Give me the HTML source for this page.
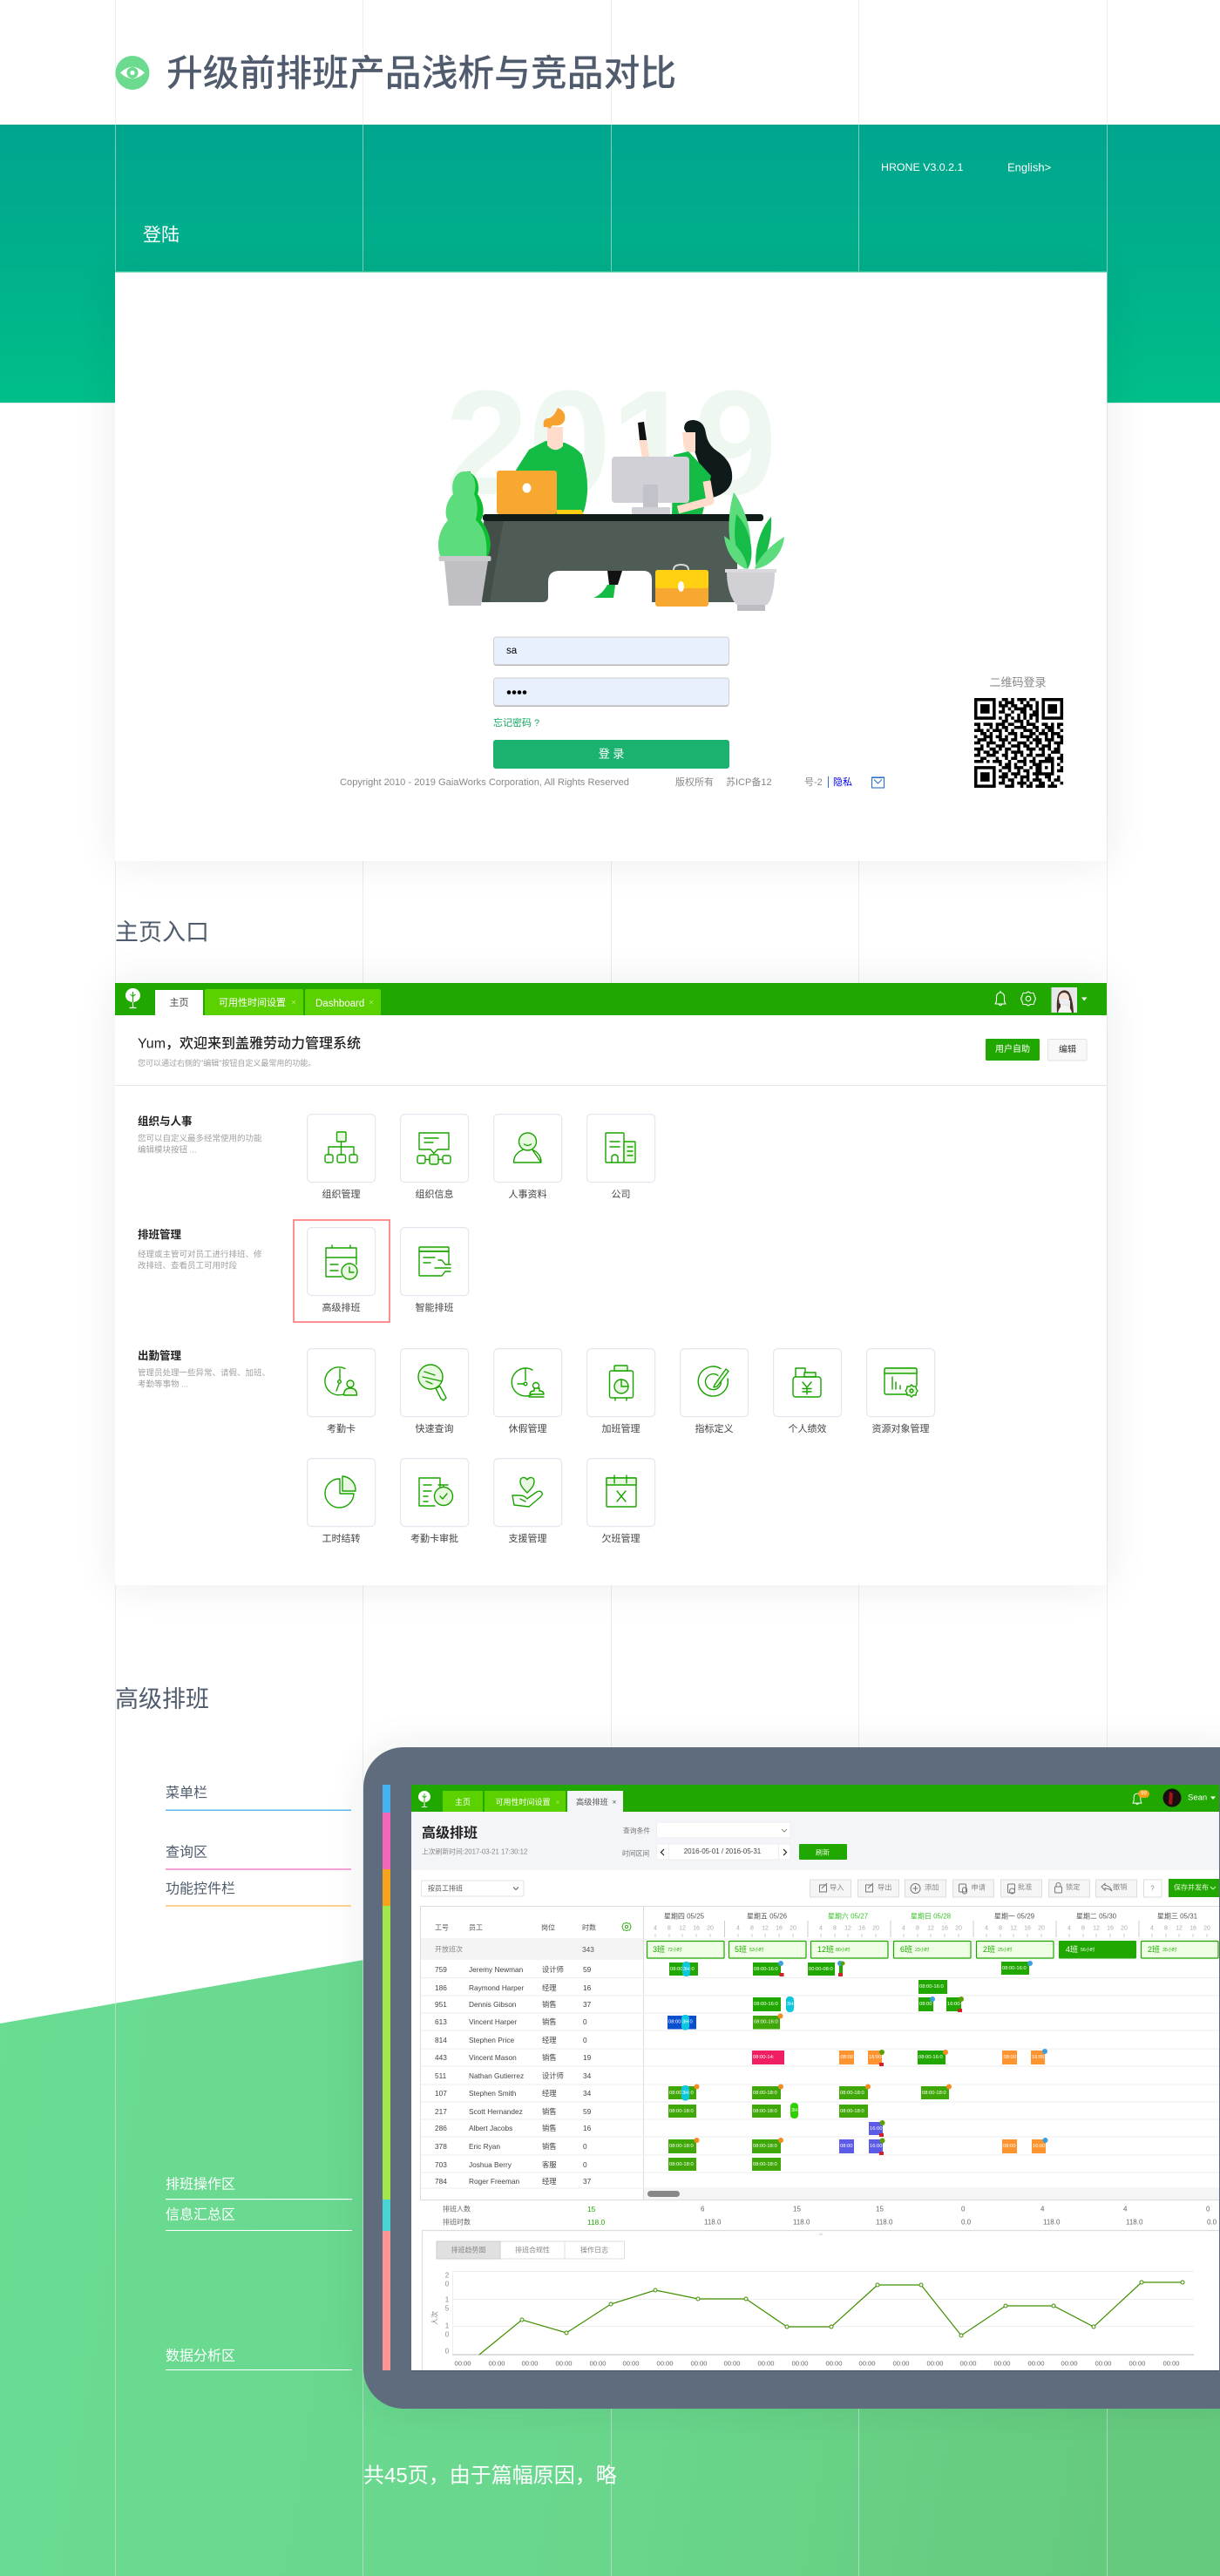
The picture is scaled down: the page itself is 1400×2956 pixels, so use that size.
<!DOCTYPE html>
<html lang="zh-CN">
<head>
<meta charset="utf-8">
<title>升级前排班产品浅析与竞品对比</title>
<style>
html,body{margin:0;padding:0;background:#fff;}
#page{position:relative;width:1400px;height:2956px;overflow:hidden;background:#fff;}
svg{position:absolute;left:0;top:0;display:block;}
.pn{position:absolute;background:#fff;box-shadow:0 0 44px rgba(0,40,40,.085);}
text{font-family:"Liberation Sans","Noto Sans CJK SC",sans-serif;dominant-baseline:central;white-space:pre;}
.m{text-anchor:middle;}
.ic{fill:none;stroke:#1aa300;stroke-width:1.4;stroke-linejoin:round;stroke-linecap:round;}
.pale{fill:#e9f8e0;}
.card{fill:#fff;stroke:#e6e6ef;stroke-width:1.2;}
.lb{font-size:11px;fill:#444;text-anchor:middle;}
.sh{font-size:12.5px;font-weight:700;fill:#222;}
.ss{font-size:9.5px;fill:#a0a0a0;}
.r{font-size:8.3px;fill:#444;}
.hd{font-size:8px;fill:#555;}
.tk{font-size:7px;fill:#aaa;text-anchor:middle;}
.dt{font-size:8px;fill:#555;text-anchor:middle;}
.dg{font-size:8px;fill:#3bc12a;text-anchor:middle;}
.bx{fill:#efffe5;stroke:#20a800;stroke-width:1.2;}
.bn{font-size:9px;fill:#20a800;}
.bs{font-size:5.2px;fill:#20a800;}
.b{font-size:5.8px;fill:#fff;}
.g1{fill:#20a800;}.g2{fill:#3fa808;}.or{fill:#fd9430;}.pu{fill:#5b5be8;}.cy{fill:#0cc8de;}
.tb{fill:#f5f5f5;stroke:#dcdcdc;stroke-width:1;}
.tt{font-size:8.2px;fill:#888;}
.ti{fill:none;stroke:#777;stroke-width:1;}
.sm{font-size:8px;fill:#666;}
.ax{font-size:7.6px;fill:#666;text-anchor:middle;}
.yl{font-size:8px;fill:#888;text-anchor:middle;}
.an{font-size:16px;}
</style>
</head>
<body>
<div id="page">

<svg width="1400" height="2956" viewBox="0 0 1400 2956">
  <defs>
    <linearGradient id="band" x1="0" y1="0" x2="0" y2="1"><stop offset="0" stop-color="#00a58e"/><stop offset=".5" stop-color="#00b08c"/><stop offset="1" stop-color="#00bf89"/></linearGradient>
    <linearGradient id="poly" x1="0" y1="0" x2="1" y2="0.1"><stop offset="0" stop-color="#6adc93"/><stop offset=".6" stop-color="#69d68c"/><stop offset="1" stop-color="#65ca7e"/></linearGradient>
  </defs>
  <rect x="0" y="143" width="1400" height="319" fill="url(#band)"/>
  <rect x="0" y="462" width="1400" height="1" fill="#d6efe7"/>
  <polygon points="0,2322 1400,2077 1400,2956 0,2956" fill="url(#poly)"/>
  <g stroke="#dfe1e3" stroke-opacity=".6" stroke-width="1">
    <path d="M132.5 0V2956M416.5 0V2956M701.5 0V2956M985.5 0V2956M1270.5 0V2956"/>
  </g>
</svg>

<div class="pn" style="left:132px;top:312px;width:1138px;height:676px;"></div>
<div class="pn" style="left:132px;top:1128px;width:1138px;height:691px;"></div>
<div class="pn" style="left:417px;top:2005px;width:1000px;height:759px;background:#5f6c7e;border-radius:46px 0 0 46px;"></div>

<svg width="1400" height="2956" viewBox="0 0 1400 2956">
  <!-- page title -->
  <circle cx="152" cy="83.5" r="19.5" fill="#6cdb90"/>
  <path d="M138 83.5Q152 70 166 83.5Q152 97 138 83.5Z" fill="#fff"/>
  <circle cx="152" cy="83.5" r="6.5" fill="#6cdb90"/>
  <circle cx="152" cy="83.5" r="2.6" fill="#fff"/>
  <text x="191" y="84" font-size="41.8" font-weight="500" fill="#505c6e">升级前排班产品浅析与竞品对比</text>

  <!-- login header -->
  <rect x="132" y="311" width="1138" height="1.5" fill="#2cc39a"/>
  <text x="1011" y="192" font-size="12.4" fill="#fff">HRONE V3.0.2.1</text>
  <text x="1156" y="192" font-size="13" fill="#fff">English&gt;</text>
  <text x="164" y="270" font-size="21" fill="#fff">登陆</text>

  <!-- illustration -->
  <text x="511" y="567" font-size="171" font-weight="700" fill="#eef8f0" style="dominant-baseline:alphabetic">2019</text>
  <!-- man -->
  <path d="M591 541L607 516Q620 509 626 506L648 508Q662 514 668 522Q675 545 674 565Q672 585 668 590L600 590Z" fill="#14bb45"/>
  <path d="M628 490H646V512Q637 521 628 511Z" fill="#ffdccb"/>
  <path d="M624 490Q622 480 630 480Q636 478 640 468Q650 472 648 482Q645 490 634 488L631 492L628 490Z" fill="#f7a12e"/>
  <rect x="570" y="540" width="69" height="50" rx="3" fill="#f7a830"/>
  <ellipse cx="604.5" cy="560" rx="5" ry="5.5" fill="#fff"/>
  <path d="M639 585H667L670 590H639Z" fill="#ffd012"/>
  <!-- woman -->
  <path d="M733 505L742 503L745 525L737 525Z" fill="#ffdccb"/>
  <path d="M732 485L739 484L742 505L734 505Z" fill="#121212"/>
  <path d="M785 492Q785 482 796 482Q808 483 810 497Q812 510 822 517Q842 530 840 550Q838 565 818 571L815 560Q800 530 795 510Z" fill="#0e1b1a"/>
  <path d="M783 496H798V518L788 520Q783 510 784 505Z" fill="#ffdccb"/>
  <path d="M773 522L790 518Q806 535 816 546L806 590H771Z" fill="#14bb45"/>
  <path d="M811 552L815 575L778 585" fill="none" stroke="#ffdccb" stroke-width="9" stroke-linejoin="round"/>
  <rect x="702" y="524" width="89" height="53" rx="4" fill="#d0d0d6"/>
  <rect x="738" y="556" width="17" height="27" fill="#c2c2ca"/>
  <rect x="725" y="582" width="44" height="8" rx="1" fill="#d0d0d6"/>
  <!-- desk -->
  <path d="M555 598H846V691H748V665Q748 655 738 655H642Q629 655 629 668V685Q629 691 622 691H553Z" fill="#4f5b55"/>
  <path d="M556 598H578Q570 640 562 691H553Z" fill="#434e49"/>
  <path d="M697 655H714L709 671H699Z" fill="#121212"/>
  <path d="M697 671H706L704 686H681Q691 682 697 671Z" fill="#14bb45"/>
  <rect x="554" y="590" width="322" height="8" rx="3" fill="#0f1c1a"/>
  <!-- briefcase -->
  <path d="M773 654Q773 648 781.500 648Q790 648 790 654" fill="none" stroke="#d9d9d9" stroke-width="2"/>
  <rect x="752" y="654" width="61" height="42" rx="3" fill="#f7a830"/>
  <path d="M752 657Q752 654 755 654H810Q813 654 813 657V672Q813 675 810 675H755Q752 675 752 672Z" fill="#ffd012"/>
  <ellipse cx="781.500" cy="673" rx="3.5" ry="6" fill="#fff"/>
  <!-- left plant -->
  <path d="M533 541C545 541 552 555 548 567C556 578 556 590 552 597C562 610 566 625 560 638H540V541Z" fill="#0cbf30"/>
  <path d="M533 541C522 541 517 555 520 567C512 575 509 590 514 597C505 607 500 622 505 638H558C560 620 555 605 546 597C549 585 548 575 544 567C548 555 544 541 533 541Z" fill="#5cdc7c"/>
  <path d="M510 644H560L552 695H515Z" fill="#bfbfc4"/>
  <rect x="503.500" y="638" width="60" height="6" rx="2" fill="#c9c9cd"/>
  <!-- right plant -->
  <path d="M885 593C870 610 865 635 868 653C880 640 886 620 885 593Z" fill="#17bb47"/>
  <path d="M842 565C832 600 835 640 855 653C868 630 860 590 842 565Z" fill="#5cdc7c"/>
  <path d="M845 590C840 620 845 640 858 653C868 635 860 605 845 590Z" fill="#17bb47"/>
  <path d="M900 616C885 625 870 640 866 653C885 650 898 635 900 616Z" fill="#5cdc7c"/>
  <path d="M831 615C833 635 845 650 858 653C855 635 845 625 831 615Z" fill="#5cdc7c"/>
  <path d="M834 657H889C889 675 885 690 880 694H846C840 690 834 675 834 657Z" fill="#d0d0d5"/>
  <rect x="846" y="694" width="32" height="7" fill="#bcbcc2"/>
  <rect x="832" y="653" width="59" height="4" fill="#dadade"/>

  <!-- login form -->
  <rect x="566.500" y="731" width="270" height="33" rx="3" fill="#b9b9b9"/>
  <rect x="566.500" y="731" width="270" height="31.500" rx="3" fill="#e8f0fe" stroke="#cfcfcf"/>
  <text x="581" y="747" font-size="11.5" fill="#000">sa</text>
  <rect x="566.500" y="778" width="270" height="33" rx="3" fill="#b9b9b9"/>
  <rect x="566.500" y="778" width="270" height="31.500" rx="3" fill="#e8f0fe" stroke="#cfcfcf"/>
  <g fill="#000"><circle cx="584" cy="794.500" r="2.300"/><circle cx="590" cy="794.500" r="2.300"/><circle cx="596" cy="794.500" r="2.300"/><circle cx="602" cy="794.500" r="2.300"/></g>
  <text x="566" y="830" font-size="11" fill="#10a860">忘记密码 ?</text>
  <rect x="566" y="849" width="271" height="33" rx="3" fill="#1bb270"/>
  <text x="701.500" y="865" font-size="13" fill="#fff" class="m">登 录</text>
  <text x="390" y="898" font-size="11" fill="#888" textLength="332" lengthAdjust="spacingAndGlyphs">Copyright 2010 - 2019 GaiaWorks Corporation, All Rights Reserved</text>
  <text x="775" y="898" font-size="11" fill="#888">版权所有</text>
  <text x="833" y="898" font-size="11" fill="#888">苏ICP备12</text>
  <text x="923" y="898" font-size="11" fill="#888">号-2</text>
  <rect x="950" y="891" width="1" height="13" fill="#2a70c8"/>
  <text x="956" y="898" font-size="11" fill="#0000ee">隐私</text>
  <rect x="1000.500" y="892" width="14" height="12" fill="none" stroke="#2a70c8" stroke-width="1.1"/>
  <path d="M1001 892.500H1014M1003 894.500L1007.500 899L1012 894.500" fill="none" stroke="#2a70c8" stroke-width="1"/>

  <text x="1168" y="783" font-size="13" fill="#888" class="m">二维码登录</text>
  <!-- QR -->
  <g transform="translate(1118 801) scale(3.52 3.55)">
    <g fill="none" stroke="#000" stroke-width="1">
      <rect x=".5" y=".5" width="6" height="6"/><rect x="22.500" y=".5" width="6" height="6"/><rect x=".5" y="22.500" width="6" height="6"/>
      <path d="M9 .5h2M12 .5h1M14 .5h3M18 .5h2M8 1.500h1M10 1.500h3M15 1.500h1M17 1.500h1M20 1.500h1M8 2.500h3M12 2.500h2M16 2.500h3M20 2.500h1M9 3.500h1M11 3.500h1M13 3.500h4M18 3.500h1M20 3.500h1M8 4.500h2M12 4.500h1M15 4.500h2M19 4.500h2M10 5.500h2M14 5.500h1M16 5.500h1M18 5.500h3M8 6.500h1M10 6.500h1M12 6.500h1M14 6.500h1M16 6.500h1M18 6.500h1M20 6.500h1M9 7.500h2M13 7.500h3M17 7.500h1M20 7.500h1M0 8.500h2M3 8.500h3M7 8.500h3M11 8.500h2M15 8.500h1M17 8.500h3M22 8.500h2M25 8.500h1M27 8.500h2M1 9.500h1M5 9.500h1M7 9.500h1M9 9.500h2M13 9.500h4M19 9.500h2M23 9.500h3M27 9.500h1M0 10.500h3M4 10.500h1M6 10.500h3M10 10.500h1M12 10.500h1M16 10.500h3M20 10.500h1M22 10.500h1M24 10.500h2M28 10.500h1M2 11.500h2M5 11.500h1M8 11.500h1M11 11.500h3M15 11.500h1M18 11.500h2M21 11.500h3M25 11.500h3M0 12.500h1M3 12.500h3M7 12.500h2M10 12.500h1M13 12.500h1M15 12.500h4M20 12.500h1M23 12.500h1M25 12.500h1M27 12.500h2M1 13.500h3M5 13.500h1M8 13.500h3M12 13.500h2M17 13.500h1M19 13.500h3M23 13.500h3M28 13.500h1M0 14.500h2M4 14.500h2M6 14.500h1M9 14.500h1M11 14.500h1M14 14.500h3M18 14.500h1M20 14.500h2M24 14.500h1M26 14.500h3M2 15.500h1M4 15.500h1M7 15.500h3M12 15.500h3M16 15.500h2M20 15.500h1M22 15.500h3M27 15.500h1M0 16.500h3M5 16.500h2M8 16.500h1M10 16.500h2M14 16.500h1M17 16.500h3M21 16.500h2M24 16.500h1M26 16.500h2M1 17.500h1M3 17.500h2M6 17.500h2M10 17.500h1M12 17.500h4M18 17.500h1M22 17.500h1M25 17.500h3M0 18.500h2M4 18.500h3M9 18.500h2M13 18.500h1M15 18.500h1M17 18.500h2M20 18.500h3M24 18.500h1M28 18.500h1M2 19.500h2M7 19.500h1M10 19.500h1M12 19.500h2M16 19.500h1M19 19.500h1M23 19.500h3M27 19.500h2M0 20.500h3M4 20.500h1M6 20.500h3M11 20.500h1M14 20.500h3M18 20.500h2M21 20.500h5M28 20.500h1M8 21.500h1M10 21.500h2M13 21.500h1M16 21.500h1M19 21.500h2M21 21.500h1M25 21.500h1M27 21.500h1M9 22.500h3M13 22.500h3M18 22.500h1M20 22.500h2M23 22.500h1M25 22.500h1M28 22.500h1M8 23.500h1M11 23.500h1M14 23.500h1M16 23.500h2M20 23.500h1M21 23.500h1M25 23.500h1M27 23.500h2M9 24.500h2M12 24.500h3M17 24.500h1M19 24.500h2M21 24.500h5M8 25.500h3M13 25.500h1M15 25.500h3M20 25.500h1M23 25.500h2M27 25.500h1M9 26.500h1M11 26.500h2M15 26.500h1M17 26.500h1M19 26.500h3M24 26.500h1M26 26.500h2M8 27.500h2M12 27.500h1M14 27.500h3M18 27.500h1M21 27.500h2M25 27.500h1M28 27.500h1M10 28.500h3M15 28.500h1M17 28.500h2M20 28.500h3M24 28.500h3"/>
    </g>
    <rect x="2" y="2" width="3" height="3"/><rect x="24" y="2" width="3" height="3"/><rect x="2" y="24" width="3" height="3"/>
  </g>

  <!-- section headings -->
  <text x="132" y="1070" font-size="27" fill="#505c6e">主页入口</text>
  <text x="132" y="1950" font-size="27" fill="#505c6e">高级排班</text>

  <!-- APP PANEL header -->
  <rect x="132" y="1128" width="1138" height="37" fill="#20a800"/>
  <g transform="translate(152.500 1145)">
    <path d="M0 -11C5 -11 8.500 -7 8.500 -2.500C8.500 2 4 5 0 5C-4 5 -8.500 2 -8.500 -2.500C-8.500 -7 -5 -11 0 -11Z" fill="#fff"/>
    <path d="M0 -7V12M-3 -4L0 -1.500M3 -4L0 -1.500" stroke="#20a800" stroke-width="1.1" fill="none"/>
    <path d="M0 5V11M-4 11.500H4" stroke="#fff" stroke-width="1.2" fill="none"/>
  </g>
  <rect x="178" y="1136" width="55" height="29" fill="#fff"/>
  <text x="205.500" y="1151" font-size="11" fill="#444" class="m">主页</text>
  <path d="M235 1137Q235 1135 237 1135H346Q348 1135 348 1137V1165H235Z" fill="#5cd100"/>
  <text x="251" y="1151" font-size="11" fill="#fff">可用性时间设置</text>
  <text x="337" y="1151" font-size="10" fill="#a9ef5e" class="m">×</text>
  <path d="M350 1137Q350 1135 352 1135H435Q437 1135 437 1137V1165H350Z" fill="#5cd100"/>
  <text x="362" y="1152" font-size="11.500" fill="#fff">Dashboard</text>
  <text x="426" y="1151" font-size="10" fill="#a9ef5e" class="m">×</text>
  <g transform="translate(1148 1146)" fill="none" stroke="#fff" stroke-width="1.1" stroke-linejoin="round">
    <path d="M-6 6C-4 4 -4.500 1 -4.500 -2C-4.500 -5 -2.500 -7 0 -7C2.500 -7 4.500 -5 4.500 -2C4.500 1 4 4 6 6ZM-2 6Q0 9.500 2 6M0 -7V-9"/>
  </g>
  <g transform="translate(1180 1146)" fill="none" stroke="#fff" stroke-width="1.1" stroke-linejoin="round">
    <path d="M0 -8L2.500 -6.500L6 -6.500L7 -3.500L8.500 0L7 3.500L6 6.500L2.500 6.500L0 8L-2.500 6.500L-6 6.500L-7 3.500L-8.500 0L-7 -3.500L-6 -6.500L-2.500 -6.500Z"/>
    <circle r="2.800"/>
  </g>
  <rect x="1206.500" y="1133" width="29.500" height="29" fill="#e6e8ea"/>
  <path d="M1213 1162Q1212 1146 1215 1140Q1220 1134 1226 1138Q1231 1144 1232 1162H1228V1148H1217V1162Z" fill="#4a3026"/>
  <ellipse cx="1221" cy="1146" rx="6" ry="7" fill="#f6e2d8"/>
  <rect x="1215.500" y="1146" width="11" height="6" rx="2" fill="#eceef2"/>
  <path d="M1214 1162Q1216 1154 1221 1154Q1228 1154 1230 1162Z" fill="#f4f4f4"/>
  <path d="M1241 1144.500H1247.500L1244.200 1148.500Z" fill="#fff"/>

  <text x="158" y="1198" font-size="16" font-weight="500" fill="#222">Yum，欢迎来到盖雅劳动力管理系统</text>
  <text x="158" y="1220" font-size="9" fill="#a0a0a0">您可以通过右侧的"编辑"按钮自定义最常用的功能。</text>
  <rect x="1131" y="1192" width="62" height="25" rx="1.500" fill="#20a800"/>
  <text x="1162" y="1204.500" font-size="10" fill="#fff" class="m">用户自助</text>
  <rect x="1202.500" y="1192.500" width="44.500" height="24.500" rx="1.500" fill="#f8f8f8" stroke="#e2e2e2"/>
  <text x="1225" y="1205" font-size="10" fill="#333" class="m">编辑</text>
  <rect x="132" y="1245" width="1138" height="1" fill="#e6e6e8"/>

  <!-- sections -->
  <text x="158" y="1287" class="sh">组织与人事</text>
  <text x="158" y="1307" class="ss">您可以自定义最多经常使用的功能</text>
  <text x="158" y="1320" class="ss">编辑模块按钮 ...</text>
  <text x="158" y="1417" class="sh">排班管理</text>
  <text x="158" y="1440" class="ss">经理或主管可对员工进行排班、修</text>
  <text x="158" y="1453" class="ss">改排班、查看员工可用时段</text>
  <text x="158" y="1556" class="sh">出勤管理</text>
  <text x="158" y="1576" class="ss">管理员处理一些异常、请假、加班、</text>
  <text x="158" y="1589" class="ss">考勤等事物 ...</text>

  <!-- row 1 -->
  <g transform="translate(352 1278)">
    <rect class="card" x=".6" y=".6" width="78" height="78" rx="5"/>
    <g class="ic"><rect class="pale" x="34.500" y="21" width="10.500" height="11" rx="1"/><path d="M39.500 32V47M25 47V38H54V47"/><rect x="21" y="47" width="9" height="9" rx="2"/><rect x="35" y="47" width="9.500" height="9" rx="2"/><rect x="49" y="47" width="9" height="9" rx="2"/></g>
  </g>
  <text x="391.500" y="1371" class="lb">组织管理</text>
  <g transform="translate(459 1278)">
    <rect class="card" x=".6" y=".6" width="78" height="78" rx="5"/>
    <g class="ic"><path d="M22 22H56V41H43L39 45.500L35 41H22Z"/><path d="M28 28H44M28 33H38"/><rect x="20" y="48" width="9" height="9" rx="2"/><rect class="pale" x="34" y="47" width="10" height="11" rx="2"/><rect x="49" y="48" width="9" height="9" rx="2"/><path d="M29 52.500H34M44 52.500H49"/></g>
  </g>
  <text x="498.500" y="1371" class="lb">组织信息</text>
  <g transform="translate(566 1278)">
    <rect class="card" x=".6" y=".6" width="78" height="78" rx="5"/>
    <g class="ic"><circle class="pale" cx="39.500" cy="32" r="10"/><path d="M35.500 35Q39.500 38 43.500 35"/><path d="M23.500 56C23.500 47 30 43 34 41.500M45 41.500C49 43 55 47 55 56Z M23.500 56H55"/></g>
  </g>
  <text x="605.500" y="1371" class="lb">人事资料</text>
  <g transform="translate(673 1278)">
    <rect class="card" x=".6" y=".6" width="78" height="78" rx="5"/>
    <g class="ic"><rect x="22" y="22" width="21" height="34" rx="1"/><rect class="pale" x="43" y="32" width="13" height="24" rx="1"/><path d="M27 32H38M27 38H38M47 38H53M47 43H53M47 48H53M29 56V49Q32.500 45 36 49V56"/></g>
  </g>
  <text x="712.500" y="1371" class="lb">公司</text>

  <!-- row 2 -->
  <rect x="337" y="1400" width="110" height="117" fill="none" stroke="#fa8484" stroke-width="1.800"/>
  <g transform="translate(352 1408)">
    <rect class="card" x=".6" y=".6" width="78" height="78" rx="5"/>
    <g class="ic"><path d="M40 57H22V24H57V43"/><path d="M22 35H57M29 21V24M50 21V24"/><path d="M27 43H36M27 50H36"/><circle class="pale" cx="49" cy="51" r="9"/><path d="M49 46V52H54"/></g>
  </g>
  <text x="391.500" y="1501" class="lb">高级排班</text>
  <g transform="translate(459 1408)">
    <rect class="card" x=".6" y=".6" width="78" height="78" rx="5"/>
    <g class="ic"><path class="pale" d="M22 28V24Q22 23 23 23H55Q56 23 56 24V28Z"/><path d="M56 42V28H22V55Q22 56 23 56H44"/><path d="M27 35H40M27 41H35M40 47H52L58 47M44 38H48L52 43H58M44 56H48L52 51H58"/></g>
  </g>
  <text x="498.500" y="1501" class="lb">智能排班</text>

  <!-- row 3 -->
  <g transform="translate(352 1547)">
    <rect class="card" x=".6" y=".6" width="78" height="78" rx="5"/>
    <g class="ic"><path d="M44 23.500A16 16 0 1 0 42 53"/><path d="M38 24V36M37 41L34 49"/><circle cx="37.500" cy="38.500" r="1.800"/><circle class="pale" cx="50" cy="41" r="4"/><path class="pale" d="M42.500 54Q42.500 46 50 46Q57.500 46 57.500 54Z"/></g>
  </g>
  <text x="391.500" y="1640" class="lb">考勤卡</text>
  <g transform="translate(459 1547)">
    <rect class="card" x=".6" y=".6" width="78" height="78" rx="5"/>
    <g class="ic"><circle class="pale" cx="35" cy="33" r="14"/><path d="M28 27L40 31M26 33L48 38M30 38L37 41"/><path d="M41 46L46 44L53 57L50 60L47 58Z"/></g>
  </g>
  <text x="498.500" y="1640" class="lb">快速查询</text>
  <g transform="translate(566 1547)">
    <rect class="card" x=".6" y=".6" width="78" height="78" rx="5"/>
    <g class="ic"><path d="M45 25A16 16 0 1 0 45 53"/><path d="M37 23V37M28 41H35"/><circle cx="37" cy="41" r="1.800"/><circle cx="49" cy="43" r="3.500"/><path class="pale" d="M47 46V49Q42 49 42 53H58Q58 49 53 49V46Z"/><path d="M41 56H58"/></g>
  </g>
  <text x="605.500" y="1640" class="lb">休假管理</text>
  <g transform="translate(673 1547)">
    <rect class="card" x=".6" y=".6" width="78" height="78" rx="5"/>
    <g class="ic"><rect x="26.500" y="26" width="27" height="31" rx="2"/><path class="pale" d="M32 26V21Q32 20 33 20H46Q47 20 47 21V26Z"/><circle class="pale" cx="40" cy="44" r="8"/><path d="M40 36V44H48M33 57V60M46 57V60"/></g>
  </g>
  <text x="712.500" y="1640" class="lb">加班管理</text>
  <g transform="translate(780 1547)">
    <rect class="card" x=".6" y=".6" width="78" height="78" rx="5"/>
    <g class="ic"><path d="M47 23.500A17 17 0 1 0 55 35"/><path d="M44 31.500A9 9 0 1 0 47.500 39"/><path class="pale" d="M40 42L53 24L56 26.500L43 44L39 45Z"/></g>
  </g>
  <text x="819.500" y="1640" class="lb">指标定义</text>
  <g transform="translate(887 1547)">
    <rect class="card" x=".6" y=".6" width="78" height="78" rx="5"/>
    <g class="ic"><path d="M26 33V23H37V33"/><path class="pale" d="M36 33V28H49V33Z"/><rect x="23" y="33" width="32" height="23" rx="3"/><path d="M34 39L39 45L44 39M39 45V53M34 46.500H44M34 50H44"/></g>
  </g>
  <text x="926.500" y="1640" class="lb">个人绩效</text>
  <g transform="translate(994 1547)">
    <rect class="card" x=".6" y=".6" width="78" height="78" rx="5"/>
    <g class="ic"><path d="M46 53H23Q21 53 21 51V25Q21 23 23 23H56Q58 23 58 25V43"/><path class="pale" d="M21 29V25Q21 23 23 23H56Q58 23 58 25V29Z"/><path d="M30 33V47M34 39V47M39 43V47"/><path class="pale" d="M52 42L54 44L57 44L57.500 47L59 49L57.500 51L57 54L54 54L52 56L50 54L47 54L46.500 51L45 49L46.500 47L47 44L50 44Z"/><circle cx="52" cy="49" r="2"/></g>
  </g>
  <text x="1033.500" y="1640" class="lb">资源对象管理</text>

  <!-- row 4 -->
  <g transform="translate(352 1673)">
    <rect class="card" x=".6" y=".6" width="78" height="78" rx="5"/>
    <g class="ic"><path d="M38 24A16.500 16.500 0 1 0 54 41H38Z"/><path class="pale" d="M41 21A16 16 0 0 1 56 38H41Z"/></g>
  </g>
  <text x="391.500" y="1766" class="lb">工时结转</text>
  <g transform="translate(459 1673)">
    <rect class="card" x=".6" y=".6" width="78" height="78" rx="5"/>
    <g class="ic"><path d="M40 55H22V23H46V33"/><path d="M27 31H36M27 38H36M27 44H32M27 50H32M44 31H55M50 31V34"/><circle class="pale" cx="50" cy="44" r="10.500"/><path d="M46 44L49 47L54 41"/></g>
  </g>
  <text x="498.500" y="1766" class="lb">考勤卡审批</text>
  <g transform="translate(566 1673)">
    <rect class="card" x=".6" y=".6" width="78" height="78" rx="5"/>
    <g class="ic"><path class="pale" d="M39 40C35 36 31 32 31 27C31 22 36 21 39 25C42 21 47 22 47 27C47 32 43 36 39 40Z"/><path d="M22 43H30Q36 43 39 47L40 46L50 39Q54 37 56 40Q57 42 54 45L41 56L24 54Z"/><path d="M31 47L37 50"/></g>
  </g>
  <text x="605.500" y="1766" class="lb">支援管理</text>
  <g transform="translate(673 1673)">
    <rect class="card" x=".6" y=".6" width="78" height="78" rx="5"/>
    <g class="ic"><rect x="23" y="23" width="34" height="33" rx="1"/><path class="pale" d="M23 31V23H57V31Z"/><path d="M32 20V29M46 20V29M35 38L45 50M45 38L35 50"/></g>
  </g>
  <text x="712.500" y="1766" class="lb">欠班管理</text>

  <!-- annotations -->
  <text x="190" y="2058" class="an" fill="#505c6e">菜单栏</text>
  <rect x="190" y="2076.500" width="213" height="1.500" fill="#5fb5ef"/>
  <text x="190" y="2126" class="an" fill="#505c6e">查询区</text>
  <rect x="190" y="2144.500" width="213" height="1" fill="#f040b0"/>
  <text x="190" y="2168" class="an" fill="#505c6e">功能控件栏</text>
  <rect x="190" y="2186.500" width="213" height="1" fill="#f5a623"/>
  <text x="190" y="2507" class="an" fill="#fff">排班操作区</text>
  <rect x="190" y="2523" width="214" height="1.200" fill="#fff"/>
  <text x="190" y="2542" class="an" fill="#fff">信息汇总区</text>
  <rect x="190" y="2559" width="214" height="1" fill="#fff"/>
  <text x="190" y="2704" class="an" fill="#fff">数据分析区</text>
  <rect x="190" y="2719" width="214" height="1" fill="#fff"/>

  <!-- strip -->
  <rect x="439" y="2048" width="9" height="32" fill="#45b3f0"/>
  <rect x="439" y="2080" width="9" height="65" fill="#f765bb"/>
  <rect x="439" y="2145" width="9" height="42" fill="#f5a41c"/>
  <rect x="439" y="2187" width="9" height="337" fill="#a2e84a"/>
  <rect x="439" y="2524" width="9" height="36" fill="#48d4d4"/>
  <rect x="439" y="2560" width="9" height="160" fill="#ff9696"/>

  <!-- screen -->
  <rect x="472" y="2048" width="927" height="672" fill="#fff"/>
  <rect x="472" y="2048" width="927" height="31" fill="#20a800"/>
  <g transform="translate(487 2064) scale(.82)">
    <path d="M0 -11C5 -11 8.500 -7 8.500 -2.500C8.500 2 4 5 0 5C-4 5 -8.500 2 -8.500 -2.500C-8.500 -7 -5 -11 0 -11Z" fill="#fff"/>
    <path d="M0 -7V5M-3 -4L0 -1.500M3 -4L0 -1.500" stroke="#20a800" stroke-width="1.100" fill="none"/>
    <path d="M0 5V11M-4 11.500H4" stroke="#fff" stroke-width="1.200" fill="none"/>
  </g>
  <rect x="508" y="2055" width="46" height="24" fill="#5cd100"/>
  <text x="531" y="2068" font-size="9" fill="#fff" class="m">主页</text>
  <rect x="556" y="2055" width="93" height="24" fill="#5cd100"/>
  <text x="568.500" y="2068" font-size="9" fill="#fff">可用性时间设置</text>
  <text x="640" y="2068" font-size="8" fill="#a9ef5e" class="m">×</text>
  <rect x="651" y="2055" width="64" height="24" fill="#f4f5f9"/>
  <text x="661" y="2068" font-size="9.200" fill="#555">高级排班</text>
  <text x="705" y="2068" font-size="8" fill="#555" class="m">×</text>
  <g transform="translate(1305 2064) scale(.85)" fill="none" stroke="#fff" stroke-width="1.100" stroke-linejoin="round"><path d="M-6 6C-4 4 -4.500 1 -4.500 -2C-4.500 -5 -2.500 -7 0 -7C2.500 -7 4.500 -5 4.500 -2C4.500 1 4 4 6 6ZM-2 6Q0 9.500 2 6"/></g>
  <rect x="1306" y="2054" width="13" height="9" rx="4.500" fill="#f7a11a"/>
  <text x="1312.500" y="2058.500" font-size="6" fill="#fff" class="m">99</text>
  <circle cx="1345" cy="2063" r="10.500" fill="#1a0e10"/>
  <path d="M1342 2056L1346 2058L1345 2071L1341 2070Z" fill="#a3141c"/>
  <text x="1363" y="2063" font-size="9.500" fill="#fff">Sean</text>
  <path d="M1389 2061.500H1395L1392 2065Z" fill="#fff"/>

  <rect x="472" y="2079" width="927" height="67" fill="#f4f5f9"/>
  <text x="484" y="2104" font-size="16" font-weight="700" fill="#222">高级排班</text>
  <text x="484" y="2125" font-size="7.800" fill="#888">上次刷新时间:2017-03-21 17:30:12</text>
  <text x="715" y="2101" font-size="7.800" fill="#777">查询条件</text>
  <rect x="753.500" y="2091" width="153.500" height="18" rx="1.500" fill="#fff" stroke="#eee"/>
  <path d="M897 2099L900 2102L903 2099" fill="none" stroke="#666" stroke-width=".8"/>
  <text x="714" y="2127" font-size="7.800" fill="#777">时间区间</text>
  <rect x="753.500" y="2116" width="153.500" height="18" rx="1.500" fill="#fff" stroke="#eee"/>
  <path d="M767.500 2116V2134M893.500 2116V2134" stroke="#eee"/>
  <path d="M762 2122L758.500 2125.500L762 2129M899 2122L902.500 2125.500L899 2129" fill="none" stroke="#222" stroke-width="1.200"/>
  <text x="829" y="2124.500" font-size="8" fill="#444" class="m">2016-05-01 / 2016-05-31</text>
  <rect x="917" y="2116" width="55" height="18" rx="1" fill="#20a800"/>
  <text x="944" y="2126" font-size="8" fill="#e8f8e0" class="m">刷新</text>

  <rect x="483.500" y="2158" width="117.500" height="18" rx="1" fill="#fff" stroke="#e2e2e2"/>
  <text x="491" y="2167" font-size="8" fill="#555">按员工排班</text>
  <path d="M589 2165.500L592 2168.500L595 2165.500" fill="none" stroke="#555" stroke-width=".9"/>

  <!-- toolbar -->
  <rect class="tb" x="929.500" y="2157" width="47" height="20"/>
  <rect class="ti" x="940.500" y="2163" width="8" height="8"/><path class="ti" d="M943 2167L949 2161"/>
  <text class="tt" x="952" y="2166">导入</text>
  <rect class="tb" x="984.500" y="2157" width="47" height="20"/>
  <rect class="ti" x="993.500" y="2163" width="8" height="8"/><path class="ti" d="M996 2167L1002 2161"/>
  <text class="tt" x="1007" y="2166">导出</text>
  <rect class="tb" x="1038.500" y="2157" width="47" height="20"/>
  <circle class="ti" cx="1050.500" cy="2167" r="5.500"/><path class="ti" d="M1047.500 2167H1053.500M1050.500 2164V2170"/>
  <text class="tt" x="1061" y="2166">添加</text>
  <rect class="tb" x="1093.500" y="2157" width="47" height="20"/>
  <rect class="ti" x="1100.500" y="2162" width="8" height="9" rx="1"/><rect class="ti" x="1104.500" y="2166" width="5" height="7" rx="2"/>
  <text class="tt" x="1114.500" y="2166">申请</text>
  <rect class="tb" x="1148.500" y="2157" width="47" height="20"/>
  <rect class="ti" x="1156.500" y="2162" width="8" height="10" rx="1"/><circle class="ti" cx="1161.500" cy="2170" r="3"/>
  <text class="tt" x="1168" y="2165.500">批准</text>
  <rect class="tb" x="1203.500" y="2157" width="47" height="20"/>
  <rect class="ti" x="1210.500" y="2165" width="8" height="7" rx="1"/><path class="ti" d="M1212 2165V2163A2.500 2.500 0 0 1 1217 2163V2165"/>
  <text class="tt" x="1223" y="2165.500">锁定</text>
  <rect class="tb" x="1257.500" y="2157" width="47" height="20"/>
  <path class="ti" d="M1264 2165L1268 2161.500V2163.500Q1274 2164 1276 2170Q1273 2167 1268 2167V2169Z"/>
  <text class="tt" x="1277" y="2165.500">撤销</text>
  <rect x="1312.500" y="2157" width="20.500" height="20" fill="#fff" stroke="#dcdcdc"/>
  <text x="1322.500" y="2167" font-size="8" fill="#888" class="m">?</text>
  <rect x="1341" y="2156" width="58" height="21" fill="#20a800"/>
  <text x="1347" y="2166" font-size="8" fill="#dff5d0">保存并发布</text>
  <path d="M1389 2165L1392 2168L1395 2165" fill="none" stroke="#e8f8e0" stroke-width=".9"/>

  <!-- table frame -->
  <path d="M482.500 2524V2187.500H1399" fill="none" stroke="#dcdcdc" stroke-width="1"/>
  <rect x="483" y="2224" width="255" height="25" fill="#f4f4f4"/>
  <rect x="739" y="2224" width="660" height="25" fill="#f9f9f9"/>
  <rect x="738" y="2187" width="1" height="337" fill="#dcdcdc"/>
  <text class="hd" x="499" y="2212">工号</text>
  <text class="hd" x="538" y="2212">员工</text>
  <text class="hd" x="621" y="2212">岗位</text>
  <text class="hd" x="668" y="2212">时数</text>
  <g transform="translate(719 2211) scale(.6)" fill="none" stroke="#20a800" stroke-width="1.500" stroke-linejoin="round"><path d="M0 -8L2.500 -6.500L6 -6.500L7 -3.500L8.500 0L7 3.500L6 6.500L2.500 6.500L0 8L-2.500 6.500L-6 6.500L-7 3.500L-8.500 0L-7 -3.500L-6 -6.500L-2.500 -6.500Z"/><circle r="2.800"/></g>
  <text x="499" y="2237" font-size="8" fill="#888">开放班次</text>
  <text x="668" y="2237" font-size="8.300" fill="#555">343</text>

  <!-- row separators -->
  <path d="M483 2269.500H1399M483 2290H1399M483 2310H1399M483 2330H1399M483 2351H1399M483 2371H1399M483 2392H1399M483 2412H1399M483 2432H1399M483 2452H1399M483 2473H1399M483 2493H1399M483 2511H1399" stroke="#eee" stroke-width="1"/>

  <!-- rows -->
  <text class="r" x="499" y="2260">759</text><text class="r" x="538" y="2260">Jeremy Newman</text><text class="r" x="622" y="2260">设计师</text><text class="r" x="669" y="2260">59</text>
  <text class="r" x="499" y="2281">186</text><text class="r" x="538" y="2281">Raymond Harper</text><text class="r" x="622" y="2281">经理</text><text class="r" x="669" y="2281">16</text>
  <text class="r" x="499" y="2300">951</text><text class="r" x="538" y="2300">Dennis Gibson</text><text class="r" x="622" y="2300">销售</text><text class="r" x="669" y="2300">37</text>
  <text class="r" x="499" y="2320">613</text><text class="r" x="538" y="2320">Vincent Harper</text><text class="r" x="622" y="2320">销售</text><text class="r" x="669" y="2320">0</text>
  <text class="r" x="499" y="2341">814</text><text class="r" x="538" y="2341">Stephen Price</text><text class="r" x="622" y="2341">经理</text><text class="r" x="669" y="2341">0</text>
  <text class="r" x="499" y="2361">443</text><text class="r" x="538" y="2361">Vincent Mason</text><text class="r" x="622" y="2361">销售</text><text class="r" x="669" y="2361">19</text>
  <text class="r" x="499" y="2382">511</text><text class="r" x="538" y="2382">Nathan Gutierrez</text><text class="r" x="622" y="2382">设计师</text><text class="r" x="669" y="2382">34</text>
  <text class="r" x="499" y="2402">107</text><text class="r" x="538" y="2402">Stephen Smith</text><text class="r" x="622" y="2402">经理</text><text class="r" x="669" y="2402">34</text>
  <text class="r" x="499" y="2423">217</text><text class="r" x="538" y="2423">Scott Hernandez</text><text class="r" x="622" y="2423">销售</text><text class="r" x="669" y="2423">59</text>
  <text class="r" x="499" y="2442">286</text><text class="r" x="538" y="2442">Albert Jacobs</text><text class="r" x="622" y="2442">销售</text><text class="r" x="669" y="2442">16</text>
  <text class="r" x="499" y="2463">378</text><text class="r" x="538" y="2463">Eric Ryan</text><text class="r" x="622" y="2463">销售</text><text class="r" x="669" y="2463">0</text>
  <text class="r" x="499" y="2484">703</text><text class="r" x="538" y="2484">Joshua Berry</text><text class="r" x="622" y="2484">客服</text><text class="r" x="669" y="2484">0</text>
  <text class="r" x="499" y="2503">784</text><text class="r" x="538" y="2503">Roger Freeman</text><text class="r" x="622" y="2503">经理</text><text class="r" x="669" y="2503">37</text>

  <!-- gantt header -->
  <text class="dt" x="785" y="2199">星期四 05/25</text>
  <text class="dt" x="880" y="2199">星期五 05/26</text>
  <text class="dg" x="973" y="2199">星期六 05/27</text>
  <text class="dg" x="1068" y="2199">星期日 05/28</text>
  <text class="dt" x="1164" y="2199">星期一 05/29</text>
  <text class="dt" x="1258" y="2199">星期二 05/30</text>
  <text class="dt" x="1351" y="2199">星期三 05/31</text>
  <path d="M831.500 2204V2223M927 2204V2223M1022 2204V2223M1117 2204V2223M1212 2204V2223M1307 2204V2223" stroke="#ccc" stroke-width="1"/>
  <path d="M752 2219V2223M768 2219V2223M783 2219V2223M799 2219V2223M815 2219V2223M847 2219V2223M863 2219V2223M878 2219V2223M894 2219V2223M910 2219V2223M942 2219V2223M958 2219V2223M973 2219V2223M989 2219V2223M1005 2219V2223M1037 2219V2223M1053 2219V2223M1068 2219V2223M1084 2219V2223M1100 2219V2223M1132 2219V2223M1148 2219V2223M1163 2219V2223M1179 2219V2223M1195 2219V2223M1227 2219V2223M1243 2219V2223M1258 2219V2223M1274 2219V2223M1290 2219V2223M1322 2219V2223M1338 2219V2223M1353 2219V2223M1369 2219V2223M1385 2219V2223" stroke="#bbb" stroke-width=".7"/>
  <text class="tk" x="752" y="2213">4</text><text class="tk" x="768" y="2213">8</text><text class="tk" x="783" y="2213">12</text><text class="tk" x="799" y="2213">16</text><text class="tk" x="815" y="2213">20</text>
  <text class="tk" x="847" y="2213">4</text><text class="tk" x="863" y="2213">8</text><text class="tk" x="878" y="2213">12</text><text class="tk" x="894" y="2213">16</text><text class="tk" x="910" y="2213">20</text>
  <text class="tk" x="942" y="2213">4</text><text class="tk" x="958" y="2213">8</text><text class="tk" x="973" y="2213">12</text><text class="tk" x="989" y="2213">16</text><text class="tk" x="1005" y="2213">20</text>
  <text class="tk" x="1037" y="2213">4</text><text class="tk" x="1053" y="2213">8</text><text class="tk" x="1068" y="2213">12</text><text class="tk" x="1084" y="2213">16</text><text class="tk" x="1100" y="2213">20</text>
  <text class="tk" x="1132" y="2213">4</text><text class="tk" x="1148" y="2213">8</text><text class="tk" x="1163" y="2213">12</text><text class="tk" x="1179" y="2213">16</text><text class="tk" x="1195" y="2213">20</text>
  <text class="tk" x="1227" y="2213">4</text><text class="tk" x="1243" y="2213">8</text><text class="tk" x="1258" y="2213">12</text><text class="tk" x="1274" y="2213">16</text><text class="tk" x="1290" y="2213">20</text>
  <text class="tk" x="1322" y="2213">4</text><text class="tk" x="1338" y="2213">8</text><text class="tk" x="1353" y="2213">12</text><text class="tk" x="1369" y="2213">16</text><text class="tk" x="1385" y="2213">20</text>

  <!-- shift boxes -->
  <rect class="bx" x="742.500" y="2227.500" width="88.500" height="19.500" rx="1"/>
  <text class="bn" x="749" y="2237">3班</text><text class="bs" x="766" y="2238">72小时</text>
  <rect class="bx" x="836.500" y="2227.500" width="88.500" height="19.500" rx="1"/>
  <text class="bn" x="843" y="2237">5班</text><text class="bs" x="860" y="2238">53小时</text>
  <rect class="bx" x="930.500" y="2227.500" width="88.500" height="19.500" rx="1"/>
  <text class="bn" x="938" y="2237">12班</text><text class="bs" x="959" y="2238">80小时</text>
  <rect class="bx" x="1025.500" y="2227.500" width="88.500" height="19.500" rx="1"/>
  <text class="bn" x="1033" y="2237">6班</text><text class="bs" x="1050" y="2238">23小时</text>
  <rect class="bx" x="1120.500" y="2227.500" width="88.500" height="19.500" rx="1"/>
  <text class="bn" x="1128" y="2237">2班</text><text class="bs" x="1145" y="2238">25小时</text>
  <rect x="1215" y="2227" width="89" height="20.500" rx="1" fill="#20a800"/>
  <text x="1223" y="2237" font-size="9" fill="#fff">4班</text><text x="1240" y="2238" font-size="5.200" fill="#fff">56小时</text>
  <rect class="bx" x="1309.500" y="2227.500" width="88.500" height="19.500" rx="1"/>
  <text class="bn" x="1317" y="2237">2班</text><text class="bs" x="1334" y="2238">35小时</text>

  <!-- bars row 759 -->
  <rect class="g1" x="768" y="2252" width="33" height="15"/><text class="b" x="769" y="2260">08:00-16:0</text>
  <rect class="cy" x="783" y="2251" width="9" height="17" rx="4"/><text class="b" x="784" y="2260">3H</text>
  <rect class="g1" x="864" y="2252" width="32" height="15"/><text class="b" x="865" y="2260">08:00-16:0</text>
  <circle cx="896" cy="2253" r="3" fill="#3aa0e0"/><rect x="894.500" y="2264" width="5" height="4" fill="#d5202a"/>
  <rect class="g1" x="927" y="2252" width="31" height="15"/><text class="b" x="928" y="2260">00:00-08:0</text>
  <rect class="g1" x="963" y="2252" width="4" height="15"/>
  <circle cx="964" cy="2253" r="3" fill="#3aa0e0"/><circle cx="967" cy="2253" r="2.500" fill="#5aa000"/><rect x="962" y="2264" width="5" height="4" fill="#d5202a"/>
  <rect class="g1" x="1149" y="2251" width="32" height="15"/><text class="b" x="1150" y="2259">08:00-16:0</text>
  <circle cx="1182" cy="2253" r="3" fill="#3aa0e0"/>
  <!-- row 186 -->
  <rect class="g1" x="1054" y="2272" width="33" height="16"/><text class="b" x="1055" y="2280">08:00-16:0</text>
  <!-- row 951 -->
  <rect class="g1" x="864" y="2292" width="32" height="16"/><text class="b" x="865" y="2300">08:00-16:0</text>
  <rect class="cy" x="902" y="2291" width="9" height="18" rx="4"/><text class="b" x="903" y="2300">3H</text>
  <rect class="g1" x="1054" y="2292" width="17" height="16"/><text class="b" x="1055" y="2300">08:00</text>
  <circle cx="1070" cy="2294" r="3" fill="#3aa0e0"/>
  <rect class="g1" x="1086" y="2292" width="17" height="16"/><text class="b" x="1087" y="2300">16:00-</text>
  <circle cx="1103" cy="2294" r="3" fill="#5aa000"/><rect x="1099" y="2305" width="5" height="4" fill="#d5202a"/>
  <!-- row 613 -->
  <rect x="766" y="2313" width="33" height="15.500" fill="#0a4fd0"/><text class="b" x="767" y="2320.500">08:00-16:0</text>
  <rect class="cy" x="782" y="2312" width="9" height="17.500" rx="4"/><text class="b" x="783" y="2320.500">3H</text>
  <rect class="g2" x="864" y="2313" width="31" height="15.500"/><text class="b" x="865" y="2320.500">08:00-16:0</text>
  <circle cx="895.500" cy="2313.500" r="3" fill="#f58a1f"/>
  <!-- row 443 -->
  <rect x="863" y="2353" width="37" height="16" fill="#f01f63"/><text class="b" x="864" y="2361">08:00-14:</text>
  <rect class="or" x="963" y="2353" width="17" height="16"/><text class="b" x="964.500" y="2361">08:00</text>
  <rect class="or" x="996" y="2353" width="16" height="16"/><text class="b" x="997" y="2361">16:00</text>
  <circle cx="1012" cy="2355" r="3" fill="#5aa000"/><rect x="1009" y="2367" width="5" height="4" fill="#d5202a"/>
  <rect class="g1" x="1053" y="2353" width="32" height="16"/><text class="b" x="1054" y="2361">08:00-16:0</text>
  <circle cx="1085" cy="2355" r="3" fill="#f58a1f"/>
  <rect class="or" x="1150" y="2353" width="17" height="16"/><text class="b" x="1151.500" y="2361">08:00</text>
  <rect class="or" x="1183" y="2353" width="16" height="16"/><text class="b" x="1184" y="2361">16:00</text>
  <circle cx="1199" cy="2354" r="3" fill="#3aa0e0"/>
  <!-- row 107 -->
  <rect class="g2" x="767" y="2394" width="32" height="15"/><text class="b" x="768" y="2402">08:00-18:0</text>
  <rect class="cy" x="782" y="2393" width="9" height="17.500" rx="4"/><text class="b" x="783" y="2402">3H</text>
  <circle cx="799.500" cy="2394.500" r="3" fill="#f58a1f"/>
  <rect class="g2" x="863" y="2394" width="33" height="15"/><text class="b" x="864" y="2402">08:00-18:0</text>
  <circle cx="896" cy="2394.500" r="3" fill="#f58a1f"/>
  <rect class="g2" x="963" y="2394" width="33" height="15"/><text class="b" x="964" y="2402">08:00-18:0</text>
  <circle cx="996" cy="2394.500" r="3" fill="#f58a1f"/>
  <rect class="g2" x="1057" y="2394" width="32" height="15"/><text class="b" x="1058" y="2402">08:00-18:0</text>
  <circle cx="1089" cy="2394.500" r="3" fill="#f58a1f"/>
  <!-- row 217 -->
  <rect class="g2" x="767" y="2415" width="32" height="15"/><text class="b" x="768" y="2423">08:00-18:0</text>
  <rect class="g2" x="863" y="2415" width="33" height="15"/><text class="b" x="864" y="2423">08:00-18:0</text>
  <rect x="907" y="2413" width="9" height="18" rx="4" fill="#2ed000"/><text class="b" x="908" y="2422">3H</text>
  <rect class="g2" x="963" y="2415" width="33" height="15"/><text class="b" x="964" y="2423">08:00-18:0</text>
  <!-- row 286 -->
  <rect class="pu" x="997" y="2435" width="16" height="15"/><text class="b" x="998" y="2443">16:00</text>
  <circle cx="1012.500" cy="2436" r="3" fill="#5aa000"/><rect x="1009" y="2448" width="5" height="4" fill="#d5202a"/>
  <!-- row 378 -->
  <rect class="g2" x="767" y="2455" width="32" height="16"/><text class="b" x="768" y="2463">08:00-18:0</text>
  <circle cx="799.500" cy="2456" r="3" fill="#f58a1f"/>
  <rect class="g2" x="863" y="2455" width="33" height="16"/><text class="b" x="864" y="2463">08:00-18:0</text>
  <circle cx="896" cy="2456" r="3" fill="#f58a1f"/>
  <rect class="pu" x="963" y="2455" width="17" height="16"/><text class="b" x="964" y="2463">08:00</text>
  <rect class="pu" x="997" y="2455" width="16" height="16"/><text class="b" x="998" y="2463">16:00</text>
  <circle cx="1012.500" cy="2456.500" r="3" fill="#5aa000"/><rect x="1009" y="2469" width="5" height="4" fill="#d5202a"/>
  <rect class="or" x="1150" y="2455" width="17" height="16"/><text class="b" x="1151" y="2463">08:00</text>
  <rect class="or" x="1184" y="2455" width="16" height="16"/><text class="b" x="1185" y="2463">16:00</text>
  <circle cx="1199.500" cy="2456" r="3" fill="#3aa0e0"/>
  <!-- row 703 -->
  <rect class="g2" x="767" y="2476" width="32" height="15"/><text class="b" x="768" y="2484">08:00-18:0</text>
  <rect class="g2" x="863" y="2476" width="33" height="15"/><text class="b" x="864" y="2484">08:00-18:0</text>

  <!-- scrollbar -->
  <rect x="739" y="2511" width="660" height="13" fill="#f5f5f5"/>
  <rect x="743" y="2514" width="37" height="7" rx="3.500" fill="#888"/>
  <rect x="482" y="2524" width="917" height="1" fill="#ddd"/>

  <!-- summary -->
  <text class="sm" x="508" y="2535">排班人数</text>
  <text class="sm" x="508" y="2550">排班时数</text>
  <text x="674" y="2535" font-size="8.300" fill="#20a800">15</text>
  <text x="674" y="2550" font-size="8.300" fill="#20a800">118.0</text>
  <text class="sm" x="804" y="2535">6</text><text class="sm" x="808" y="2550">118.0</text>
  <text class="sm" x="910" y="2535">15</text><text class="sm" x="910" y="2550">118.0</text>
  <text class="sm" x="1005" y="2535">15</text><text class="sm" x="1005" y="2550">118.0</text>
  <text class="sm" x="1103" y="2535">0</text><text class="sm" x="1103" y="2550">0.0</text>
  <text class="sm" x="1194" y="2535">4</text><text class="sm" x="1197" y="2550">118.0</text>
  <text class="sm" x="1289" y="2535">4</text><text class="sm" x="1292" y="2550">118.0</text>
  <text class="sm" x="1384" y="2535">0</text><text class="sm" x="1385" y="2550">0.0</text>

  <!-- chart panel -->
  <path d="M484.500 2720V2559.500H1399" fill="none" stroke="#ddd" stroke-width="1.200"/>
  <path d="M940 2563H944M940 2564.500H944" stroke="#bbb" stroke-width=".6"/>
  <rect x="501" y="2572" width="215.500" height="20" fill="#fff" stroke="#ddd"/>
  <rect x="501" y="2572" width="73" height="20" fill="#e0e0e0" stroke="#ccc"/>
  <path d="M648 2572V2592" stroke="#ddd"/>
  <text x="537.500" y="2582" font-size="8" fill="#888" class="m">排班趋势图</text>
  <text x="611" y="2582" font-size="8" fill="#888" class="m">排班合规性</text>
  <text x="682" y="2582" font-size="8" fill="#888" class="m">操作日志</text>

  <path d="M519.500 2606V2702M519 2606.500H1370M519 2638.500H1370M519 2669.500H1370" stroke="#eee" stroke-width="1"/>
  <rect x="519" y="2701" width="851" height="2" fill="#ddd"/>
  <polyline points="550,2702 599,2662 650,2677 701,2644 752,2628 801,2638 856,2638 903,2670 954,2670 1007,2622 1057,2622 1103,2680 1154,2646 1209,2646 1255,2670 1310,2619 1357,2619" fill="none" stroke="#3f8f00" stroke-width="1.200"/>
  <g fill="#fff" stroke="#3f8f00" stroke-width="1"><circle cx="599" cy="2662" r="2"/><circle cx="650" cy="2677" r="2"/><circle cx="701" cy="2644" r="2"/><circle cx="752" cy="2628" r="2"/><circle cx="801" cy="2638" r="2"/><circle cx="856" cy="2638" r="2"/><circle cx="903" cy="2670" r="2"/><circle cx="954" cy="2670" r="2"/><circle cx="1007" cy="2622" r="2"/><circle cx="1057" cy="2622" r="2"/><circle cx="1103" cy="2680" r="2"/><circle cx="1154" cy="2646" r="2"/><circle cx="1209" cy="2646" r="2"/><circle cx="1255" cy="2670" r="2"/><circle cx="1310" cy="2619" r="2"/><circle cx="1357" cy="2619" r="2"/></g>
  <text class="yl" x="513" y="2611">2</text><text class="yl" x="513" y="2621">0</text>
  <text class="yl" x="513" y="2639">1</text><text class="yl" x="513" y="2649">5</text>
  <text class="yl" x="513" y="2669">1</text><text class="yl" x="513" y="2679">0</text>
  <text class="yl" x="513" y="2698">0</text>
  <text class="yl" transform="translate(499 2660) rotate(-90)">人次</text>
  <text class="ax" x="531" y="2712">00:00</text><text class="ax" x="570" y="2712">00:00</text><text class="ax" x="608" y="2712">00:00</text><text class="ax" x="647" y="2712">00:00</text><text class="ax" x="686" y="2712">00:00</text><text class="ax" x="724" y="2712">00:00</text><text class="ax" x="763" y="2712">00:00</text><text class="ax" x="802" y="2712">00:00</text><text class="ax" x="840" y="2712">00:00</text><text class="ax" x="879" y="2712">00:00</text><text class="ax" x="918" y="2712">00:00</text><text class="ax" x="957" y="2712">00:00</text><text class="ax" x="995" y="2712">00:00</text><text class="ax" x="1034" y="2712">00:00</text><text class="ax" x="1073" y="2712">00:00</text><text class="ax" x="1111" y="2712">00:00</text><text class="ax" x="1150" y="2712">00:00</text><text class="ax" x="1189" y="2712">00:00</text><text class="ax" x="1227" y="2712">00:00</text><text class="ax" x="1266" y="2712">00:00</text><text class="ax" x="1305" y="2712">00:00</text><text class="ax" x="1344" y="2712">00:00</text>

  <rect x="472" y="2720" width="927" height="1" fill="#47546a"/>

  <!-- footer text -->
  <text x="417" y="2841" font-size="24" fill="#fff">共45页，由于篇幅原因，略</text>
</svg>
</div>
</body>
</html>
